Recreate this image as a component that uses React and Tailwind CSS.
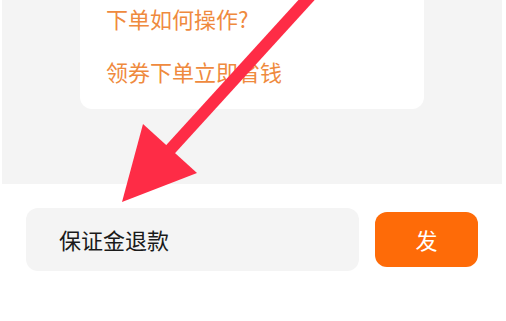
export default function App() {
  return (
    <div
      className="relative w-[506px] h-[321px] overflow-hidden bg-white"
      style={{ fontFamily: '"Noto Sans CJK SC", "Noto Sans", sans-serif' }}
    >
      {/* FAQ panel */}
      <div className="ml-[2px] mr-[4px] h-[184px] bg-[#f4f4f4]">
        <div className="ml-[78px] w-[344px] h-[109px] bg-white rounded-b-[12px] pl-[26px]">
          <div className="pt-[4px] h-[28px] leading-[28px] text-[22px] text-[#ef8a3e]">下单如何操作?</div>
          <div className="mt-[29px] h-[28px] leading-[28px] text-[22px] text-[#ef8a3e]">领券下单立即省钱</div>
        </div>
      </div>

      {/* input bar */}
      <div className="flex items-center pl-[26px] pt-[24px] gap-[16px]">
        <div className="w-[333px] h-[63px] rounded-[12px] bg-[#f4f4f4] flex items-center pl-[33px] text-[22px] text-[#1a1a1a]">
          保证金退款
        </div>
        <button className="w-[103px] h-[55px] rounded-[12px] bg-[#fe6b08] text-white text-[22px] flex items-center justify-center">
          发
        </button>
      </div>

      {/* annotation arrow */}
      <svg className="absolute left-0 top-0" width="506" height="321" viewBox="0 0 506 321">
        <line x1="312" y1="-6" x2="168" y2="152" stroke="#fe2c46" strokeWidth="12" />
        <polygon points="143,124 197,173 122,202" fill="#fe2c46" />
      </svg>
    </div>
  );
}
